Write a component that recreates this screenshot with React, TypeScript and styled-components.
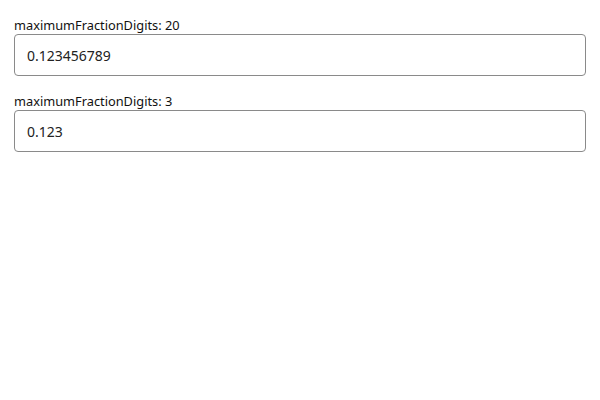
import React from "react";
import styled, { createGlobalStyle } from "styled-components";

const GlobalStyle = createGlobalStyle`
  body {
    margin: 0;
    background: #ffffff;
    font-family: "Noto Sans", sans-serif;
  }
`;

const fields = [
  { digits: 20, value: "0.123456789" },
  { digits: 3, value: "0.123" },
];

export default function App() {
  return (
    <>
      <GlobalStyle />
      <StPage>
        {fields.map((f) => (
          <StField key={f.digits}>
            <StLabel>maximumFractionDigits: {f.digits}</StLabel>
            <StInput readOnly value={f.value} />
          </StField>
        ))}
      </StPage>
    </>
  );
}

const StPage = styled.div`
  display: flex;
  flex-direction: column;
  gap: 14px;
  padding: 14px;
`;

const StField = styled.label`
  display: flex;
  flex-direction: column;
`;

const StLabel = styled.span`
  font-size: 12.8px;
  line-height: 20px;
  padding-top: 1px;
  height: 20px;
  box-sizing: border-box;
  color: #111;
`;

const StInput = styled.input`
  box-sizing: border-box;
  height: 42px;
  width: 100%;
  padding: 0 12px;
  border: 1px solid #8a8a8a;
  border-radius: 4px;
  font-family: "Noto Sans", sans-serif;
  font-size: 14px;
  color: #222;
  outline: none;
`;
